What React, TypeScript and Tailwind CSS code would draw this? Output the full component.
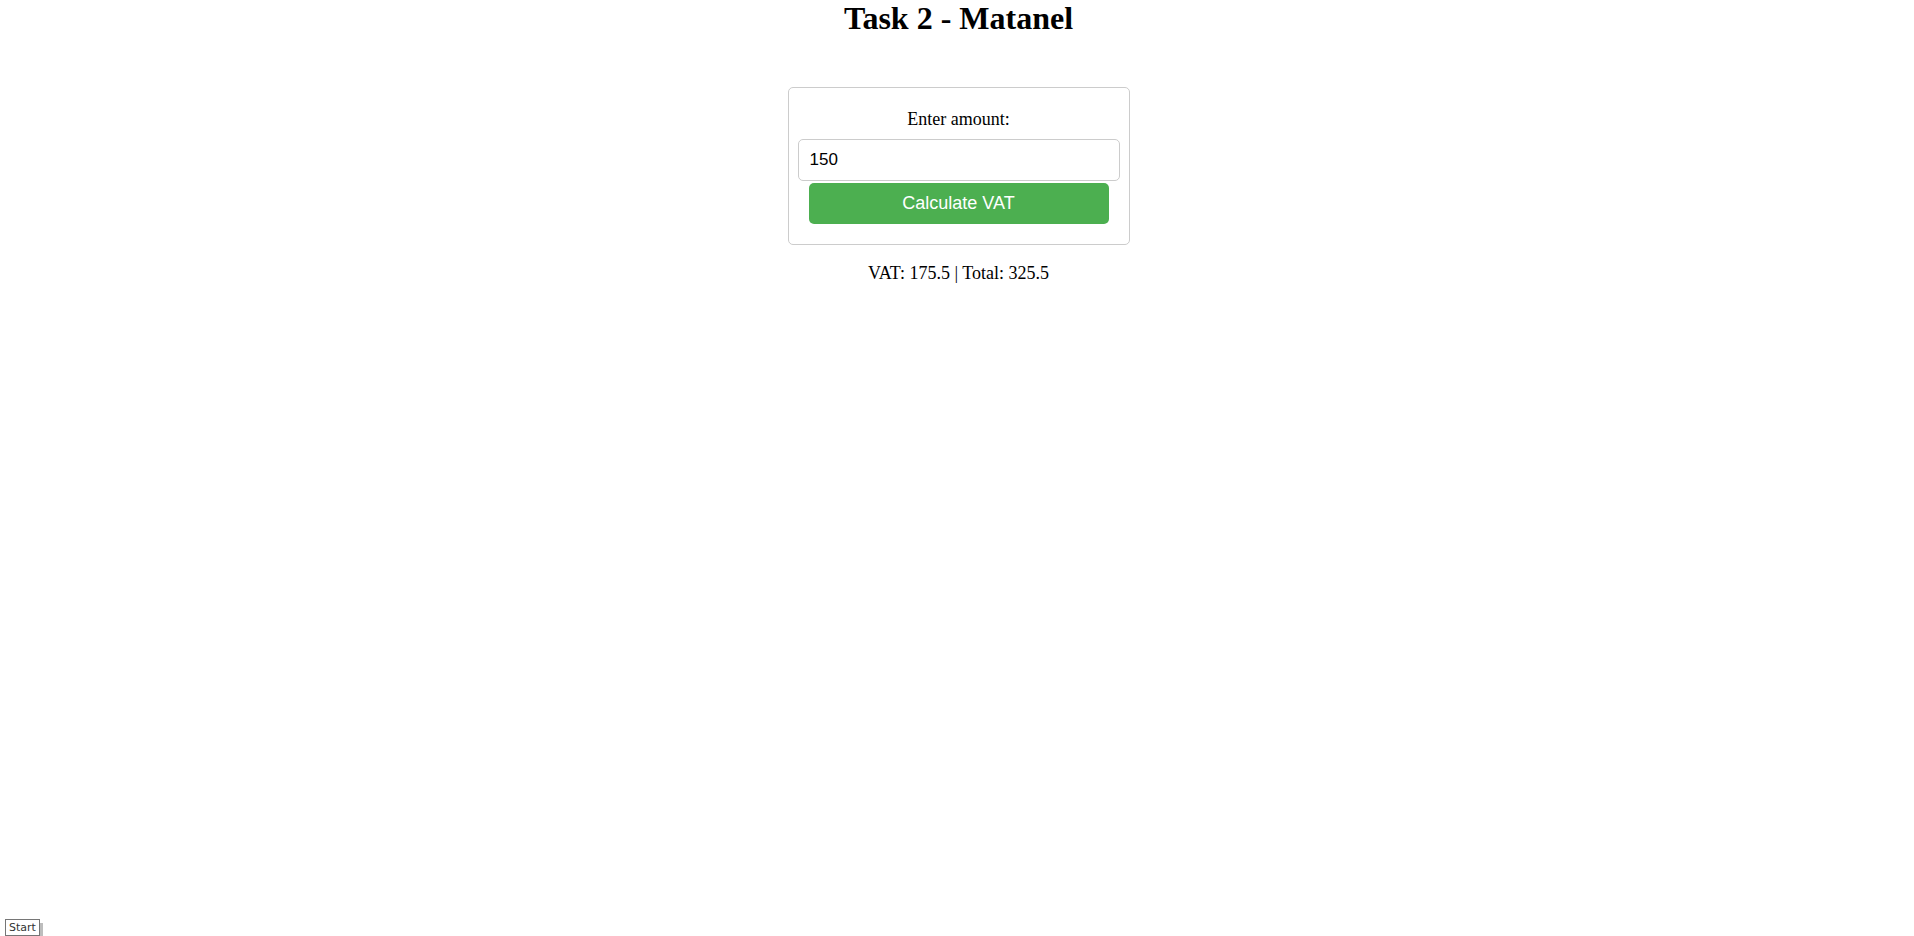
import { useState } from 'react';

export default function App() {
    const [amount, setAmount] = useState('150');
    const [result, setResult] = useState('VAT: 175.5 | Total: 325.5');

    const calculate = () => {
        const n = parseFloat(amount) || 0;
        const vat = Math.round(n * 1.17 * 10) / 10;
        setResult(`VAT: ${vat} | Total: ${Math.round((n + vat) * 10) / 10}`);
    };

    return (
        <div className="relative min-h-[936px] w-full bg-white pl-[3px] text-black font-['Liberation_Serif',serif]">
            <h1 className="m-0 text-center text-[32px] font-bold leading-[37px]">Task 2 - Matanel</h1>

            <div className="mx-auto mt-[50px] w-[342px] rounded-[5px] border border-[#cccccc] px-[9px] pt-[21px] pb-[20px] text-center">
                <label htmlFor="amount" className="block h-[21px] text-[18px] leading-[21px]">Enter amount:</label>
                <input
                    id="amount"
                    type="text"
                    value={amount}
                    onChange={(e) => setAmount(e.target.value)}
                    className="mt-[9px] block h-[42px] w-full rounded-[5px] border border-[#cccccc] px-[11px] text-left text-[17px] font-['Liberation_Sans',Arial,sans-serif] outline-none"
                />
                <button
                    onClick={calculate}
                    className="mx-auto mt-[2px] block h-[41px] w-[300px] rounded-[5px] bg-[#4caf50] text-[18px] text-white font-['Liberation_Sans',Arial,sans-serif]"
                >
                    Calculate VAT
                </button>
            </div>

            <p className="mt-[18px] text-center text-[18px] leading-[21px]">{result}</p>

            <div className="absolute bottom-0 left-[5px] flex items-end">
                <span className="border border-[#767676] bg-white px-[3px] text-[11px] leading-[15px] text-[#333] font-['DejaVu_Sans',sans-serif]">Start</span>
                <span className="h-[13px] w-[3px] bg-[#bdbdbd]"></span>
            </div>
        </div>
    );
}
